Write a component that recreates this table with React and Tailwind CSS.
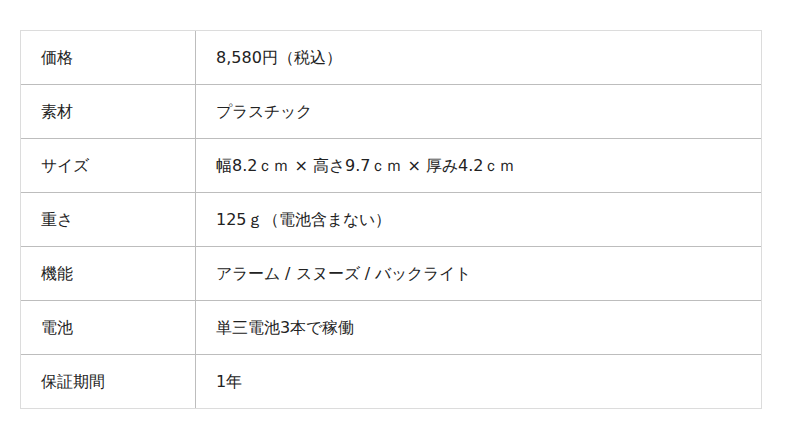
export default function App() {
  const rows = [
    ["価格", "8,580円（税込）"],
    ["素材", "プラスチック"],
    ["サイズ", "幅8.2ｃｍ × 高さ9.7ｃｍ × 厚み4.2ｃｍ"],
    ["重さ", "125ｇ（電池含まない）"],
    ["機能", "アラーム / スヌーズ / バックライト"],
    ["電池", "単三電池3本で稼働"],
    ["保証期間", "1年"],
  ];
  return (
    <div
      className="w-[800px] h-[439px] bg-white pt-[30px] pl-[20px] text-[16px] text-[#222]"
      style={{ fontFamily: '"DejaVu Sans", sans-serif' }}
    >
      <div className="w-[742px] border border-[#dcdcdc] flex flex-col">
        {rows.map(([k, v], i) => (
          <div
            key={k}
            className={
              i < rows.length - 1
                ? "flex h-[54px] border-b border-[#bdbdbd]"
                : "flex h-[53px]"
            }
          >
            <div className="w-[175px] shrink-0 border-r border-[#bdbdbd] flex items-center pl-[20px]">
              {k}
            </div>
            <div className="flex-1 flex items-center pl-[20px]">{v}</div>
          </div>
        ))}
      </div>
    </div>
  );
}
